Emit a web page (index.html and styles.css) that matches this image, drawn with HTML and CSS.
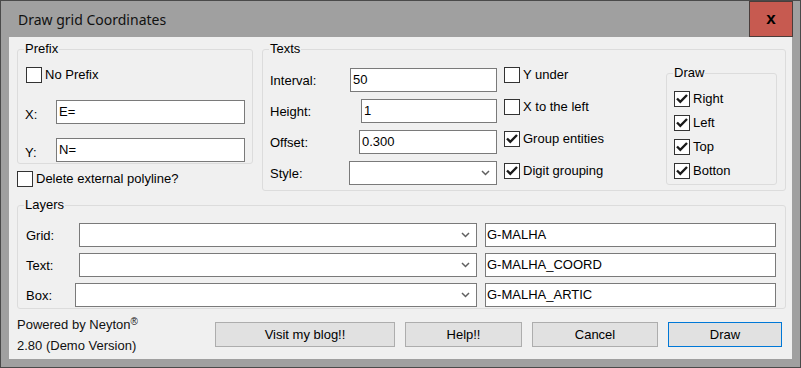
FILE: index.html
```html
<!DOCTYPE html>
<html lang="en">

<head>
    <meta charset="UTF-8">
    <meta name="viewport" content="width=device-width, initial-scale=1.0">
    <title>Draw grid Coordinates</title>
    <link rel="stylesheet" href="styles.css">
</head>

<body>

    <div class="window">
        <div class="titlebar">
            <span class="title">Draw grid Coordinates</span>
            <button class="close">x</button>
        </div>

        <div class="frame">
            <div class="content">

                <div class="top">
                    <div class="left">
                        <fieldset class="group">
                            <legend>Prefix</legend>
                            <div class="prefix-body">
                                <label class="chk"><span class="box"></span>No Prefix</label>
                                <div class="pf-row x-row">
                                    <span class="pf-label">X:</span>
                                    <input type="text" class="field" value="E=">
                                </div>
                                <div class="pf-row">
                                    <span class="pf-label">Y:</span>
                                    <input type="text" class="field" value="N=">
                                </div>
                            </div>
                        </fieldset>
                        <label class="chk del"><span class="box"></span>Delete external polyline?</label>
                    </div>

                    <fieldset class="group texts">
                        <legend>Texts</legend>
                        <div class="texts-body">
                            <div class="fields">
                                <div class="f-row">
                                    <span>Interval:</span>
                                    <input type="text" class="field w-interval" value="50">
                                </div>
                                <div class="f-row">
                                    <span>Height:</span>
                                    <input type="text" class="field w-height" value="1">
                                </div>
                                <div class="f-row">
                                    <span>Offset:</span>
                                    <input type="text" class="field w-offset" value="0.300">
                                </div>
                                <div class="f-row">
                                    <span>Style:</span>
                                    <div class="combo w-style">
                                        <svg width="9" height="6" viewBox="0 0 9 6"><path d="M1 1 L4.5 4.5 L8 1" /></svg>
                                    </div>
                                </div>
                            </div>

                            <div class="opts">
                                <label class="chk"><span class="box"></span>Y under</label>
                                <label class="chk"><span class="box"></span>X to the left</label>
                                <label class="chk"><span class="box"><svg width="14" height="14" viewBox="0 0 14 14"><path d="M2 6.5 L5.3 9.8 L12 3" /></svg></span>Group entities</label>
                                <label class="chk"><span class="box"><svg width="14" height="14" viewBox="0 0 14 14"><path d="M2 6.5 L5.3 9.8 L12 3" /></svg></span>Digit grouping</label>
                            </div>

                            <fieldset class="group draw">
                                <legend>Draw</legend>
                                <div class="draw-body">
                                    <label class="chk"><span class="box"><svg width="14" height="14" viewBox="0 0 14 14"><path d="M2 6.5 L5.3 9.8 L12 3" /></svg></span>Right</label>
                                    <label class="chk"><span class="box"><svg width="14" height="14" viewBox="0 0 14 14"><path d="M2 6.5 L5.3 9.8 L12 3" /></svg></span>Left</label>
                                    <label class="chk"><span class="box"><svg width="14" height="14" viewBox="0 0 14 14"><path d="M2 6.5 L5.3 9.8 L12 3" /></svg></span>Top</label>
                                    <label class="chk"><span class="box"><svg width="14" height="14" viewBox="0 0 14 14"><path d="M2 6.5 L5.3 9.8 L12 3" /></svg></span>Botton</label>
                                </div>
                            </fieldset>
                        </div>
                    </fieldset>
                </div>

                <fieldset class="group layers">
                    <legend>Layers</legend>
                    <div class="layers-body">
                        <div class="l-row">
                            <span class="l-label">Grid:</span>
                            <div class="combo w-layer">
                                <svg width="9" height="6" viewBox="0 0 9 6"><path d="M1 1 L4.5 4.5 L8 1" /></svg>
                            </div>
                            <input type="text" class="field w-name" value="G-MALHA">
                        </div>
                        <div class="l-row">
                            <span class="l-label">Text:</span>
                            <div class="combo w-layer">
                                <svg width="9" height="6" viewBox="0 0 9 6"><path d="M1 1 L4.5 4.5 L8 1" /></svg>
                            </div>
                            <input type="text" class="field w-name" value="G-MALHA_COORD">
                        </div>
                        <div class="l-row">
                            <span class="l-label">Box:</span>
                            <div class="combo w-box">
                                <svg width="9" height="6" viewBox="0 0 9 6"><path d="M1 1 L4.5 4.5 L8 1" /></svg>
                            </div>
                            <input type="text" class="field w-name" value="G-MALHA_ARTIC">
                        </div>
                    </div>
                </fieldset>

                <div class="bottom">
                    <div class="about">
                        <p>Powered by Neyton<sup>®</sup></p>
                        <p>2.80 (Demo Version)</p>
                    </div>
                    <div class="buttons">
                        <button class="btn w-blog">Visit my blog!!</button>
                        <button class="btn w-help">Help!!</button>
                        <button class="btn w-cancel">Cancel</button>
                        <button class="btn btn-default w-draw">Draw</button>
                    </div>
                </div>

            </div>
        </div>
    </div>

</body>

</html>
```

FILE: styles.css
```css
* {
    margin: 0;
    padding: 0;
    box-sizing: border-box;
}

body {
    width: 801px;
    height: 368px;
    background-color: #a0a0a0;
    font-family: "Liberation Sans", Arial, sans-serif;
    font-size: 13px;
    color: #000;
}

.window {
    width: 801px;
    height: 368px;
    border: 1px solid #4a4a4a;
    background-color: #a0a0a0;
}

.titlebar {
    height: 36px;
    display: flex;
    align-items: center;
    padding-left: 17px;
}

.title {
    flex: 1;
    font-family: "Noto Sans", sans-serif;
    font-size: 14px;
    color: #111;
}

.close {
    width: 44px;
    height: 36px;
    margin-right: 7px;
    background-color: #c75a50;
    border: 1px solid #4a3d3b;
    font-family: "Liberation Sans", Arial, sans-serif;
    font-weight: bold;
    font-size: 17px;
    line-height: 30px;
    color: #000;
}

.frame {
    padding: 0 8px 8px 8px;
}

.content {
    height: 322px;
    background-color: #f0f0f0;
    padding: 5px 6px 0 8px;
}

/* group boxes */
.group {
    border: 1px solid #dcdcdc;
    border-radius: 3px;
    min-width: 0;
}

.group legend {
    margin-left: 6px;
    padding: 0 1px;
    line-height: 14px;
}

/* checkboxes */
.chk {
    display: flex;
    align-items: center;
    gap: 3px;
    height: 16px;
    line-height: 16px;
    white-space: nowrap;
}

.box {
    width: 16px;
    height: 16px;
    flex: none;
    border: 1px solid #333;
    background-color: #fff;
}

.box svg {
    display: block;
}

.box path {
    fill: none;
    stroke: #1a1a1a;
    stroke-width: 2.4;
}

/* inputs */
.field {
    height: 24px;
    border: 1px solid #7a7a7a;
    background-color: #fff;
    padding: 0 2px 1px 2px;
    font-family: inherit;
    font-size: 13px;
    color: #000;
    outline: none;
}

.combo {
    height: 24px;
    border: 1px solid #7a7a7a;
    background-color: #fff;
    display: flex;
    align-items: center;
    justify-content: flex-end;
    padding-right: 6px;
}

.combo svg {
    display: block;
}

.combo path {
    fill: none;
    stroke: #606060;
    stroke-width: 1.5;
}

/* top part */
.top {
    display: flex;
    align-items: flex-start;
    gap: 9px;
}

.left {
    width: 236px;
    flex: none;
}

.prefix-body {
    padding: 11px 7px 1px 8px;
}

.pf-row {
    height: 24px;
    display: flex;
    align-items: center;
    justify-content: space-between;
}

.prefix-body .chk {
    margin-bottom: 17px;
}

.x-row {
    margin-bottom: 14px;
}

.pf-label {
    padding-top: 4px;
    margin-left: -1px;
}

.prefix-body .field {
    width: 189px;
}

.del {
    margin-top: 7px;
}

.texts {
    flex: 1;
}

.texts-body {
    display: flex;
    align-items: flex-start;
    padding: 10px 8px 5px 7px;
}

.fields {
    width: 227px;
    flex: none;
    margin-top: 2px;
    display: flex;
    flex-direction: column;
    gap: 7px;
}

.f-row {
    height: 24px;
    display: flex;
    align-items: center;
    justify-content: space-between;
}

.w-interval {
    width: 147px;
}

.w-height {
    width: 136px;
}

.w-offset {
    width: 138px;
}

.w-style {
    width: 148px;
}

.opts {
    width: 162px;
    flex: none;
    margin-left: 7px;
    margin-top: 1px;
    display: flex;
    flex-direction: column;
    gap: 16px;
}

.draw {
    width: 111px;
    flex: none;
}

.draw-body {
    padding: 11px 4px 5px 7px;
    display: flex;
    flex-direction: column;
    gap: 8px;
}

/* layers */
.layers {
    margin-top: 7px;
}

.layers-body {
    padding: 11px 9px 1px 8px;
    display: flex;
    flex-direction: column;
    gap: 6px;
}

.l-row {
    height: 24px;
    display: flex;
    align-items: center;
}

.l-label {
    flex: 1;
}

.w-layer {
    width: 398px;
}

.w-box {
    width: 402px;
}

.w-name {
    width: 291px;
    margin-left: 8px;
    padding-left: 1px;
}

/* bottom */
.bottom {
    display: flex;
    align-items: flex-start;
    padding-top: 5px;
}

.about {
    line-height: 21px;
    color: #111;
}

.about sup {
    font-size: 10px;
    line-height: 0;
    vertical-align: 4px;
}

.buttons {
    margin-left: auto;
    margin-right: 4px;
    margin-top: 8px;
    display: flex;
    gap: 10px;
}

.btn {
    height: 25px;
    background-color: #e1e1e1;
    border: 1px solid #adadad;
    font-family: inherit;
    font-size: 13px;
    color: #000;
}

.btn-default {
    border-color: #0078d7;
}

.w-blog {
    width: 180px;
}

.w-help {
    width: 117px;
}

.w-cancel {
    width: 126px;
}

.w-draw {
    width: 114px;
}
```
